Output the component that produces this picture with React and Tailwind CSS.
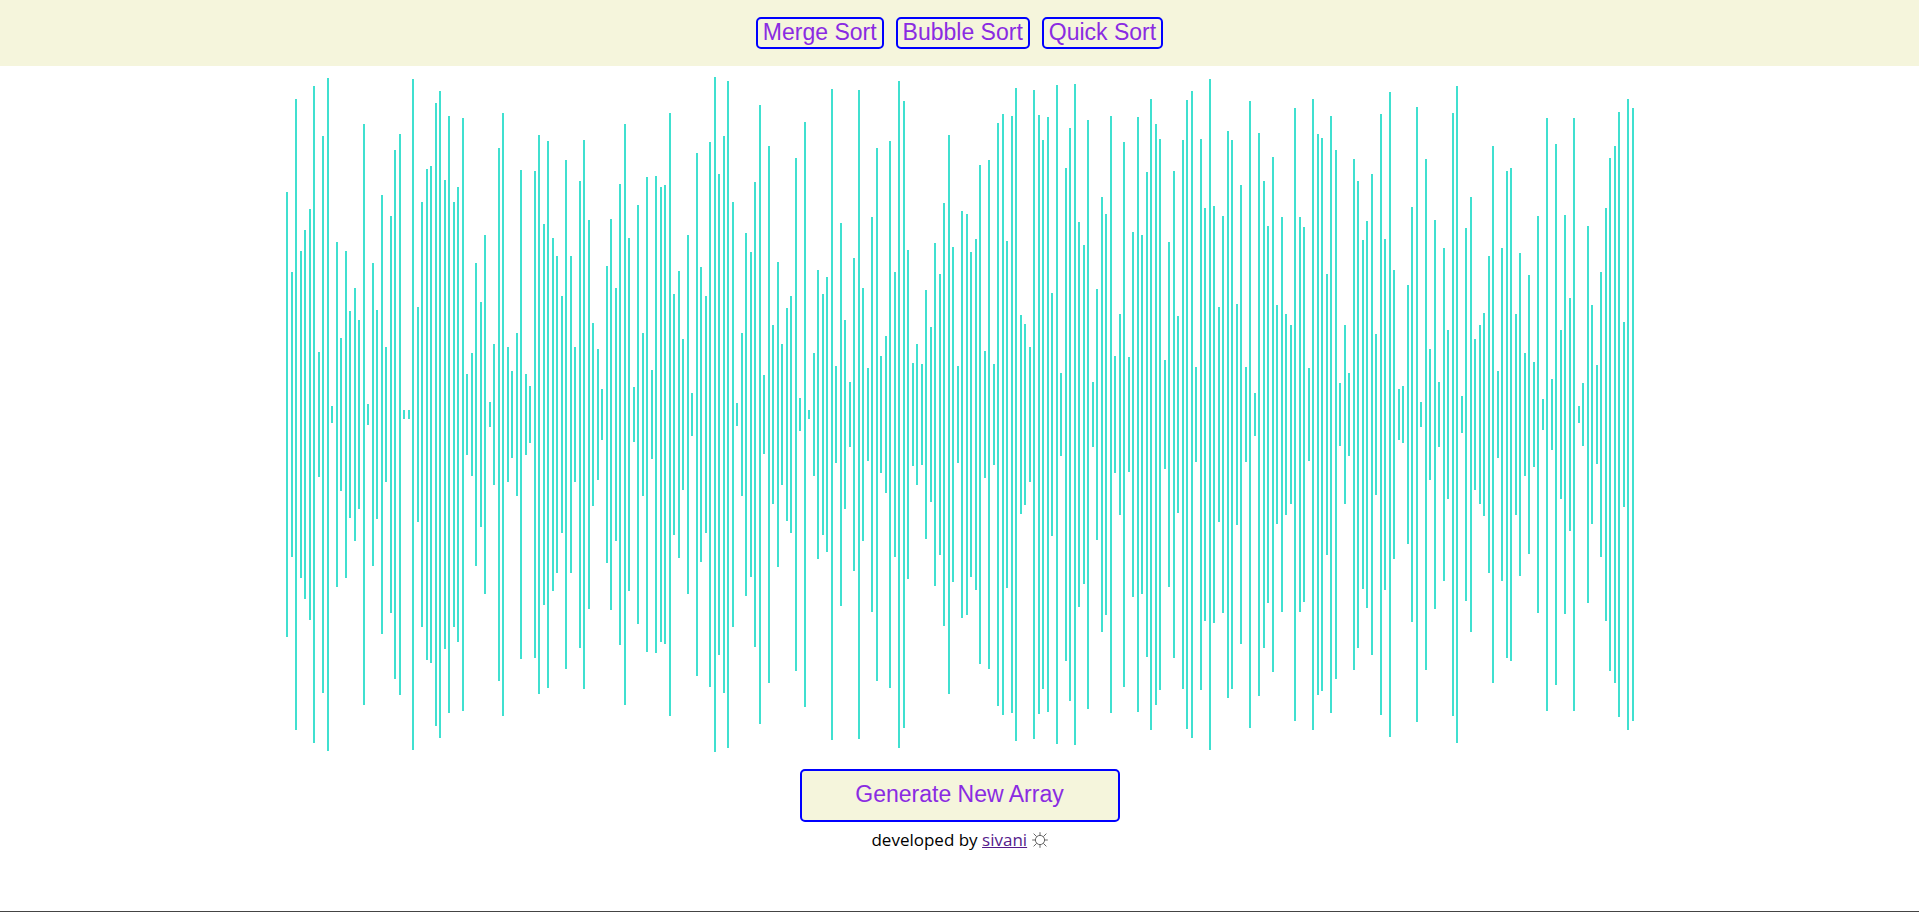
import React from "react";

const PLOT_HEIGHT = 689;

// Distance from the top of the plot to the tip of each bar.
const INSETS = [
  122, 202, 29, 181, 160, 139, 16, 282, 66, 8, 336, 172, 268, 181, 241, 218, 250, 54, 334, 193, 240, 125, 277, 146, 80,
  64, 340, 340, 9, 237, 132, 99, 96, 33, 21, 110, 46, 132, 117, 48, 304, 283, 193,
  232, 165, 332, 274, 78, 43, 277, 301, 263, 100, 304, 316, 101, 65, 154, 71, 168, 186, 226, 90, 186, 277, 111, 70, 150,
  253, 279, 319, 196, 149, 218, 114, 54, 168, 317, 135, 263, 107, 300, 106, 117, 115, 43, 224, 201,
  269, 165, 323, 83, 197, 226, 72, 7, 104, 66, 11, 132, 333, 263, 163, 182, 112, 35, 305, 76, 255, 192, 274, 238, 226,
  88, 328, 52, 340, 283, 200, 224, 207, 19, 296, 153, 250, 312, 188, 20, 218, 298, 147, 78,
  286, 266, 71, 202, 11, 31, 180, 293, 274, 294, 220, 257, 173, 204, 133, 65, 177, 296, 141, 144, 182, 169, 95, 281, 90,
  294, 53, 44, 171, 46, 18, 245, 254, 277, 20, 45, 70, 47, 223, 15, 303, 98, 58, 14, 152,
  175, 50, 312, 219, 127, 144, 46, 286, 244, 72, 287, 162, 47, 165, 102, 29, 54, 69, 290, 172, 101, 246, 70, 30, 21,
  297, 69, 138, 9, 136, 237, 146, 61, 70, 234, 115, 297, 31, 323, 63, 111, 156, 87, 235,
  147, 244, 255, 38, 147, 157, 298, 29, 64, 68, 204, 46, 80, 313, 255, 303, 89, 111, 170, 151, 104, 264, 44, 169, 22,
  200, 319, 316, 215, 137, 37, 332, 89, 279, 150, 312, 178, 260, 43, 16, 326, 158, 127, 269, 255,
  243, 186, 76, 301, 178, 101, 98, 244, 183, 283, 205, 292, 146, 329, 48, 309, 74, 260, 145, 228, 48, 336, 313, 156,
  235, 295, 202, 138, 88, 76, 42, 252, 29, 38,
];

const SORTS = ["Merge Sort", "Bubble Sort", "Quick Sort"];

function SortButton({ children }) {
  return (
    <button
      type="button"
      className="cursor-pointer rounded-[5px] border-2 border-[#0000ff] bg-[#f5f5dc] px-[5px] pt-px pb-[2px] text-[23px] leading-[25px] text-[#8a2be2]"
    >
      {children}
    </button>
  );
}

function SunIcon() {
  return (
    <svg
      viewBox="0 0 16 16"
      className="inline-block size-4 align-[-2px]"
      fill="none"
      stroke="#555"
      strokeWidth="0.9"
      aria-hidden="true"
    >
      <circle cx="8" cy="8" r="4.6" />
      <path d="M8 0.2V3.4M8 12.6V15.8M0.2 8H3.4M12.6 8H15.8M1.6 1.6L4.7 4.7M11.3 11.3L14.4 14.4M14.4 1.6L11.3 4.7M4.7 11.3L1.6 14.4" />
    </svg>
  );
}

export default function App() {
  return (
    <div className="flex min-h-screen flex-col border-b border-[#444] bg-white font-['Liberation_Sans',Arial,sans-serif]">
      <nav className="flex flex-wrap justify-center gap-3 bg-[#f5f5dc] py-[17px]">
        {SORTS.map((name) => (
          <SortButton key={name}>{name}</SortButton>
        ))}
      </nav>

      <main className="flex flex-col items-center pt-1">
        <div className="flex w-[1349px] max-w-full items-center justify-between pl-px" style={{ height: PLOT_HEIGHT }}>
          {INSETS.map((inset, i) => (
            <div key={i} className="w-[2px] shrink-0 bg-[#40e0d0]" style={{ height: PLOT_HEIGHT - 2 * inset }} />
          ))}
        </div>

        <button
          type="button"
          className="mt-[10px] w-80 max-w-full cursor-pointer rounded-[5px] border-2 border-[#0000ff] bg-[#f5f5dc] pt-[11px] pb-[13px] text-[23px] leading-[25px] text-[#8a2be2]"
        >
          Generate New Array
        </button>

        <p className="mt-1 font-['Open_Sans','Noto_Sans',sans-serif] text-[17px] leading-7 text-black">
          developed by{" "}
          <a href="#sivani" className="text-[#551a8b] underline">
            sivani
          </a>{" "}
          <SunIcon />
        </p>
      </main>
    </div>
  );
}
